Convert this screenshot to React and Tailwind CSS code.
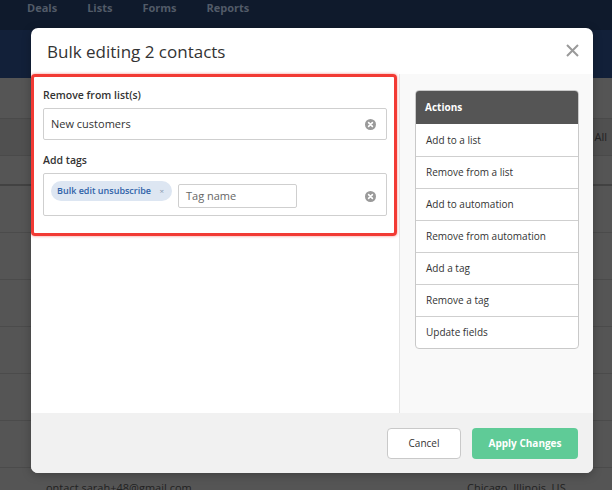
import React from 'react';

const actions = [
    'Add to a list',
    'Remove from a list',
    'Add to automation',
    'Remove from automation',
    'Add a tag',
    'Remove a tag',
    'Update fields',
];

const ClearIcon = () => (
    <svg width="11" height="11" viewBox="0 0 11 11">
        <circle cx="5.5" cy="5.5" r="5.5" fill="#9a9a9a" />
        <path d="M3.6 3.6 L7.4 7.4 M7.4 3.6 L3.6 7.4" stroke="#fff" strokeWidth="1.6" strokeLinecap="round" />
    </svg>
);

const App = () => {
    return (
        <div className="relative w-[612px] h-[490px] overflow-hidden bg-[#555555] font-['Open_Sans',sans-serif]">
            {/* page behind the overlay */}
            <div className="h-[30px] bg-[#0f1a2c] flex items-start pl-[27px] gap-[30px] text-[11px] font-bold text-[#525b68] leading-[15px]">
                <span>Deals</span>
                <span>Lists</span>
                <span>Forms</span>
                <span>Reports</span>
            </div>
            <div className="h-[48px] bg-[#122039]" />
            <div className="h-[41px] border-b border-[#4a4a4a]" />
            <div className="h-[37px] bg-[#505050] border-b border-[#4a4a4a] flex items-center justify-end">
                <span className="text-[11px] text-[#222] mr-[5px]">All</span>
            </div>
            <div className="h-[30px] border-b-2 border-[#424242]" />
            {[0, 1, 2, 3, 4, 5].map((i) => (
                <div key={i} className="h-[47px] border-b border-[#4b4b4b]" />
            ))}
            <div className="flex pl-[46px] pt-[12px] text-[11px] text-[#222]">
                <span className="w-[421px]">ontact.sarah+48@gmail.com</span>
                <span>Chicago, Illinois, US</span>
            </div>

            {/* modal */}
            <div className="absolute left-[31px] top-[28px] w-[562px] h-[445px] bg-white rounded-[7px] overflow-hidden flex flex-col shadow-[0_2px_10px_rgba(0,0,0,0.25)]">
                <div className="h-[46px] flex items-center justify-between pl-[16px] pr-[14px] shrink-0">
                    <h2 className="text-[17px] text-[#333] pt-[2px]">Bulk editing 2 contacts</h2>
                    <svg width="13" height="13" viewBox="0 0 13 13" className="mb-[2px]">
                        <path d="M1 1 L12 12 M12 1 L1 12" stroke="#9a9a9a" strokeWidth="2" />
                    </svg>
                </div>

                <div className="flex flex-1 min-h-0">
                    <div className="w-[368px] shrink-0">
                        <div className="w-[366px] h-[162px] border-[3px] border-[#f23a34] rounded-[4px] pl-[9px] pt-[10px] shadow-[0_0_3px_rgba(242,58,52,0.6)]">
                            <label className="block text-[10.5px] font-semibold text-[#333] leading-[16px]">Remove from list(s)</label>
                            <div className="mt-[5px] w-[344px] h-[32px] border border-[#cfcfcf] rounded-[2px] flex items-center justify-between pl-[7px] pr-[10px]">
                                <span className="text-[11px] text-[#333]">New customers</span>
                                <ClearIcon />
                            </div>
                            <label className="block mt-[12px] text-[10.5px] font-semibold text-[#333] leading-[16px]">Add tags</label>
                            <div className="mt-[5px] w-[344px] h-[43px] border border-[#cfcfcf] rounded-[2px] flex items-start pl-[7px] pr-[10px] pt-[7px]">
                                <span className="h-[20px] w-[121px] rounded-full bg-[#dde6f2] flex items-center justify-between pl-[6px] pr-[8px] text-[9px] font-semibold text-[#2f62a8]">
                                    Bulk edit unsubscribe
                                    <span className="text-[8px] text-[#8a9ab0] font-normal">×</span>
                                </span>
                                <div className="ml-[6px] mt-[3px] w-[119px] h-[24px] border border-[#cfcfcf] rounded-[2px] flex items-center pl-[7px] text-[11px] text-[#666]">
                                    Tag name
                                </div>
                                <div className="ml-auto mt-[10px]">
                                    <ClearIcon />
                                </div>
                            </div>
                        </div>
                    </div>

                    <div className="flex-1 bg-[#f9f9f9] border-l border-[#e4e4e4] pt-[16px] pl-[15px] pr-[14px]">
                        <div className="rounded-[4px] border border-[#c9c9c9] bg-white overflow-hidden">
                            <div className="h-[33px] bg-[#555555] flex items-center pl-[9px] text-[10px] font-bold text-white">
                                Actions
                            </div>
                            {actions.map((a, i) => (
                                <div
                                    key={a}
                                    className={`h-[32px] flex items-center pl-[10px] text-[10px] text-[#333] ${i > 0 ? 'border-t border-[#cfcfcf]' : ''}`}
                                >
                                    {a}
                                </div>
                            ))}
                        </div>
                    </div>
                </div>

                <div className="h-[60px] shrink-0 bg-[#f1f1f1] flex items-center justify-end gap-[11px] pr-[15px]">
                    <button className="w-[74px] h-[31px] bg-white border border-[#c9c9c9] rounded-[4px] text-[10px] font-medium text-[#333]">
                        Cancel
                    </button>
                    <button className="w-[106px] h-[31px] bg-[#5fcb97] rounded-[4px] text-[10px] font-bold text-white">
                        Apply Changes
                    </button>
                </div>
            </div>
        </div>
    );
};

export default App;
